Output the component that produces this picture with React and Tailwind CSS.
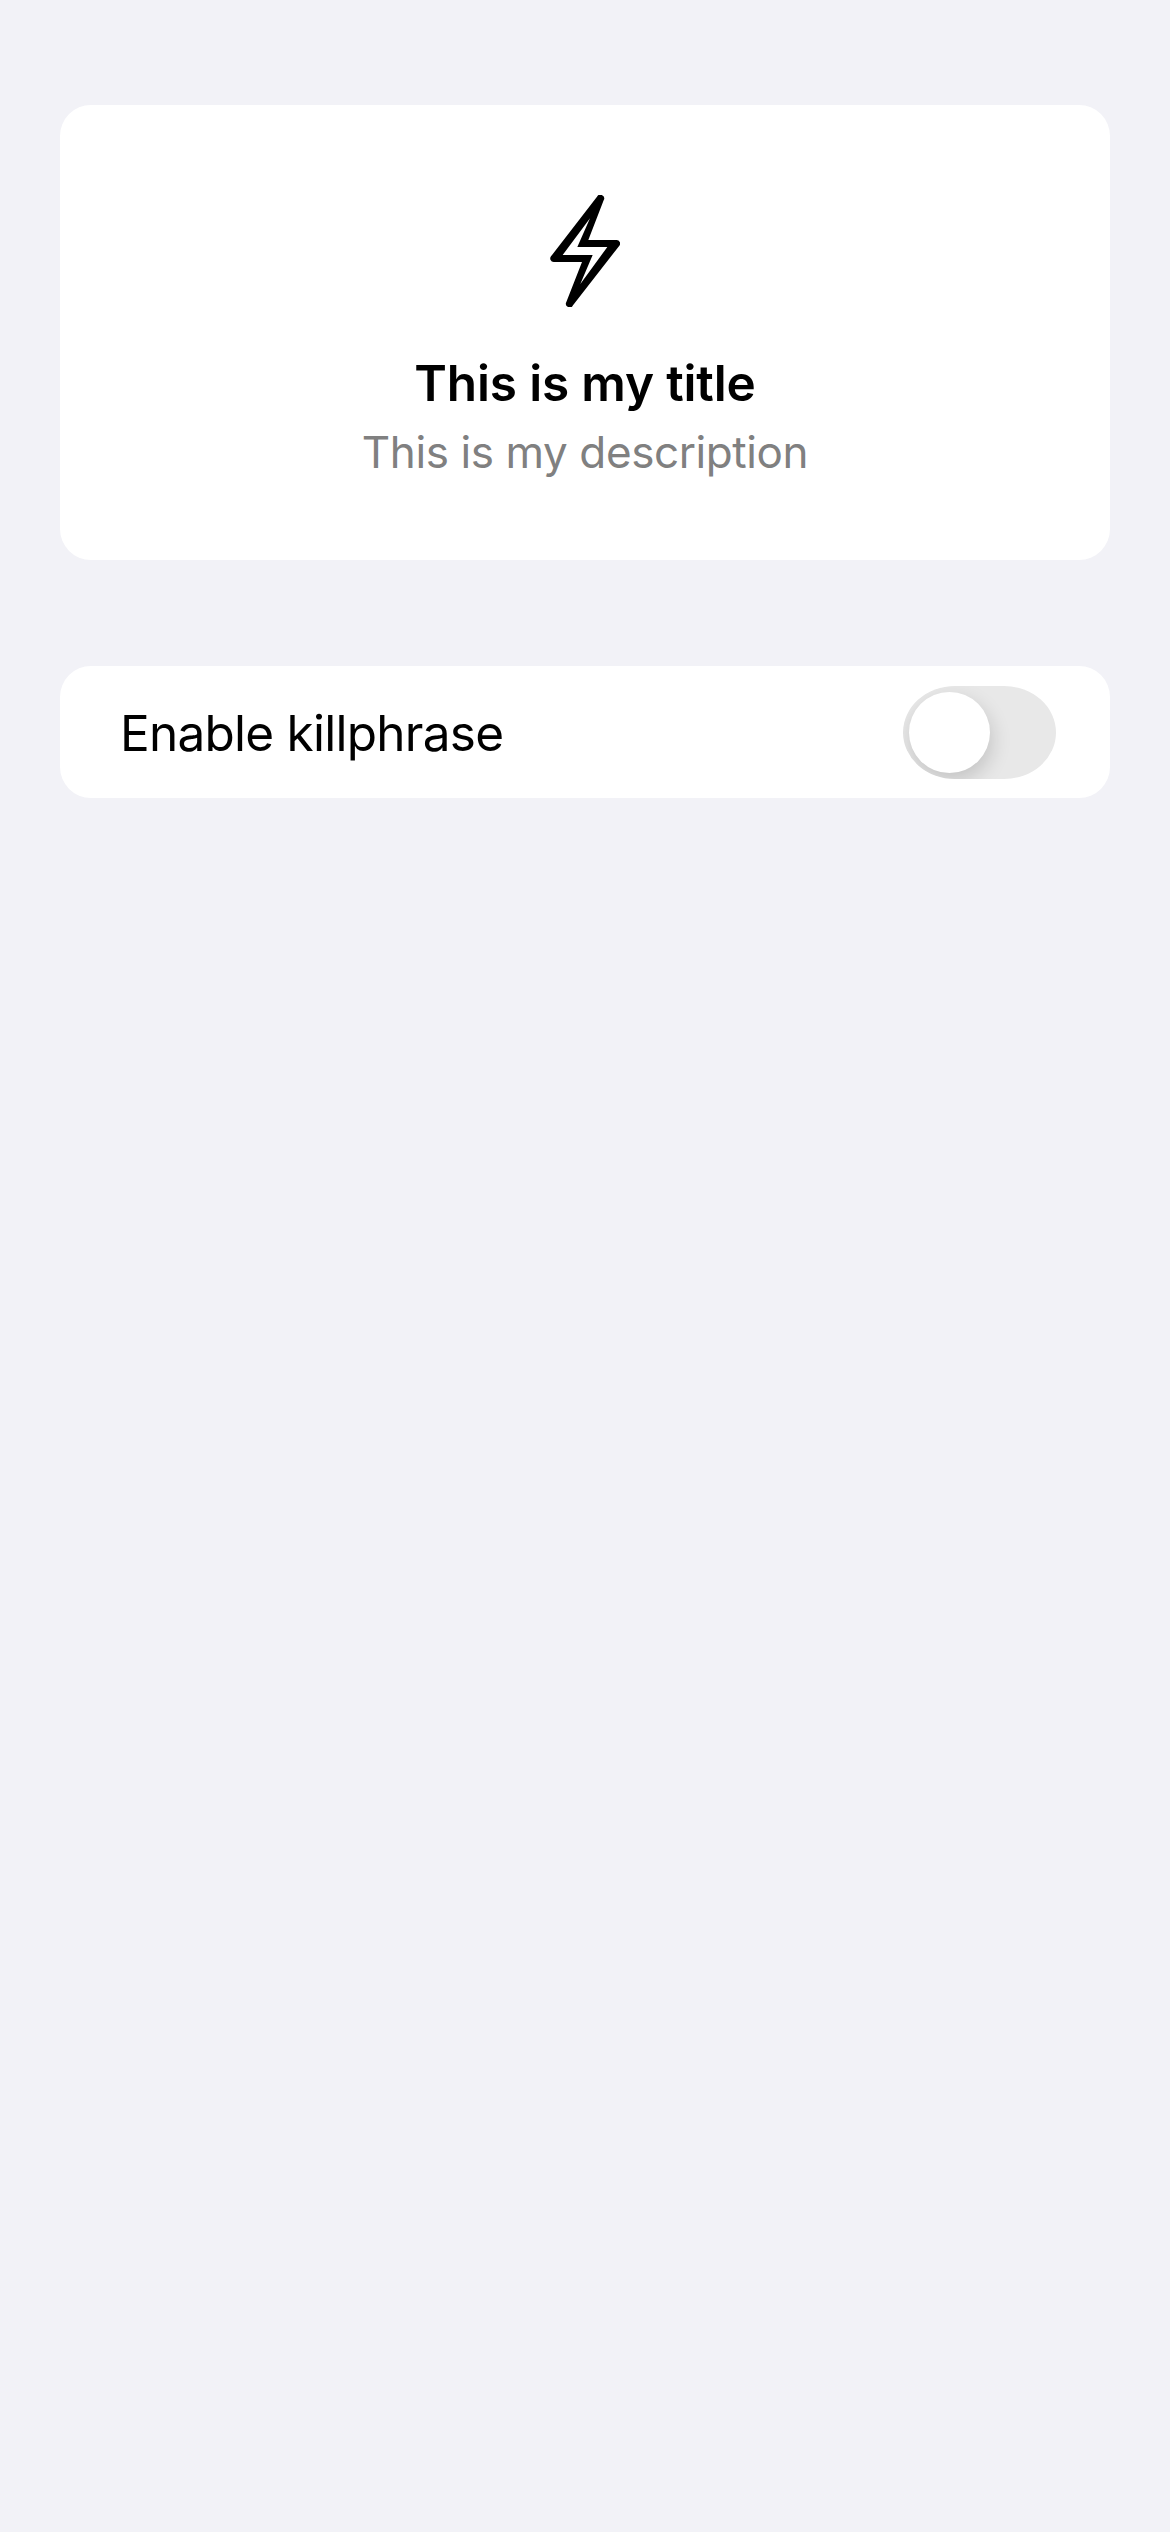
function BoltIcon() {
  return (
    <svg
      className="h-[112px] w-[70px]"
      viewBox="90 45 210 336"
      fill="#000"
      fillRule="evenodd"
      aria-hidden="true"
    >
      <path d="M231 50A11 11 0 0 1 251 61L205 180H290A10.5 10.5 0 0 1 298 197L159 376A11 11 0 0 1 139 366L186 246H101A10.5 10.5 0 0 1 93 229ZM210 115 128 225H218L181 312 262 201H172Z" />
    </svg>
  );
}

function Toggle() {
  return (
    <button
      type="button"
      role="switch"
      aria-checked="false"
      aria-label="Enable killphrase"
      className="flex h-[93px] w-[153px] shrink-0 items-center overflow-hidden rounded-[52px/46.5px] bg-[#e8e8e8] p-[6px]"
    >
      <span className="size-[81px] rounded-full bg-white shadow-[2px_8px_20px_rgba(0,0,0,0.16)]" />
    </button>
  );
}

export default function App() {
  return (
    <main className="flex h-[2532px] w-[1170px] flex-col gap-[106px] bg-[#f2f2f7] px-[60px] pt-[105px] font-['Inter',sans-serif] text-black">
      <section className="flex h-[455px] flex-col items-center rounded-[31px] bg-white pt-[90px]">
        <BoltIcon />
        <h1 className="mt-[41px] text-[49.5px] leading-[70px] font-semibold tracking-[-0.15px] whitespace-nowrap">
          This is my title
        </h1>
        <p className="-mt-px text-[44px] leading-[70px] tracking-[-0.4px] whitespace-nowrap text-[#808080]">
          This is my description
        </p>
      </section>
      <section className="flex h-[132px] items-center justify-between rounded-[31px] bg-white pr-[54px] pl-[60px]">
        <span className="pt-px text-[49.5px] leading-[70px] tracking-[-0.75px] whitespace-nowrap">
          Enable killphrase
        </span>
        <Toggle />
      </section>
    </main>
  );
}
